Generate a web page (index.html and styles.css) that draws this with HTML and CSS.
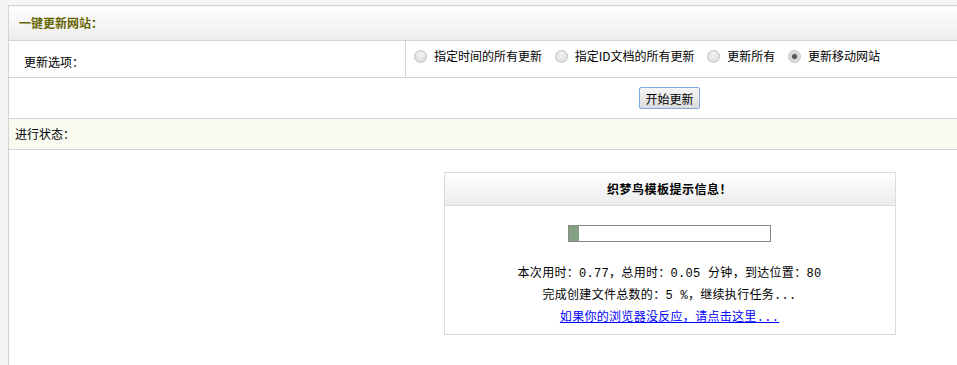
FILE: index.html
```html
<!DOCTYPE html>
<html lang="zh-CN">
<head>
    <meta charset="UTF-8">
    <title>一键更新网站</title>
    <link rel="stylesheet" href="styles.css">
</head>
<body>

    <!-- main update table -->
    <table class="main">
        <tr class="headRow">
            <td colspan="2" class="head">一键更新网站：</td>
        </tr>
        <tr class="optRow">
            <td class="label">更新选项：</td>
            <td class="opts">
                <label><input type="radio" name="uptype"> 指定时间的所有更新</label>
                <label><input type="radio" name="uptype"> 指定ID文档的所有更新</label>
                <label><input type="radio" name="uptype"> 更新所有</label>
                <label><input type="radio" name="uptype" checked> 更新移动网站</label>
            </td>
        </tr>
        <tr class="btnRow">
            <td colspan="2" class="btnCell"><button type="button" class="btn">开始更新</button></td>
        </tr>
        <tr class="statusRow">
            <td colspan="2" class="status">进行状态：</td>
        </tr>
        <tr>
            <td colspan="2" class="result">
                <!-- message box -->
                <div class="msgbox">
                    <div class="msgTitle">织梦鸟模板提示信息！</div>
                    <div class="msgBody">
                        <div class="bar"><div class="barFill" style="width: 10px;"></div></div>
                        <p>本次用时：0.77，总用时：0.05 分钟，到达位置：80</p>
                        <p>完成创建文件总数的：5 %，继续执行任务...</p>
                        <p><a href="#">如果你的浏览器没反应，请点击这里...</a></p>
                    </div>
                </div>
            </td>
        </tr>
    </table>

</body>
</html>
```

FILE: styles.css
```css
html, body {
    overflow: hidden;
}
body {
    margin: 5px 0 0 8px;
    background-color: #f5f5f5;
    font-family: "Noto Sans CJK SC", "DejaVu Sans", sans-serif;
    font-size: 12px;
    line-height: 16px;
    color: #000;
}
.main {
    width: 1323px;
    border-collapse: collapse;
    border: 1px solid #d4d4d4;
    background-color: #fff;
}
.main td {
    border-bottom: 1px solid #d4d4d4;
    padding: 0;
}
.headRow {
    height: 35px;
}
.head {
    padding-left: 10px !important;
    background: linear-gradient(#ffffff, #ececec);
    color: #666600;
    font-weight: bold;
}
.optRow {
    height: 37px;
}
.label {
    width: 381px;
    padding: 5px 0 0 15px !important;
    border-right: 1px solid #d4d4d4;
}
.opts {
    vertical-align: top;
    padding: 7px 0 0 4px !important;
}
.opts label {
    display: inline-flex;
    align-items: center;
    margin-right: 6px;
}
.opts input {
    appearance: none;
    width: 13px;
    height: 13px;
    margin: 0 7px 0 4px;
    border: 1px solid #c4c4c4;
    border-radius: 50%;
    background: radial-gradient(circle at 50% 35%, #f4f4f4, #d6d6d6);
}
.opts input:checked {
    background: radial-gradient(circle, #555 0, #555 2px, #d0d0d0 3px, #e8e8e8 6px);
}
.btnRow {
    height: 41px;
}
.btnCell {
    text-align: center;
}
.btn {
    font-family: inherit;
    font-size: 12px;
    height: 22px;
    padding: 0 5px;
    border: 1px solid #7ea9de;
    border-radius: 2px;
    background: linear-gradient(#f6f6f6, #dcdcdc);
    color: #000;
}
.statusRow {
    height: 31px;
}
.status {
    padding-left: 6px !important;
    background-color: #f9faf0;
}
.result {
    padding: 22px 0 60px 0 !important;
}
.msgbox {
    width: 450px;
    margin: 0 auto;
    border: 1px solid #dcdcdc;
}
.msgTitle {
    height: 32px;
    line-height: 32px;
    text-align: center;
    font-weight: bold;
    letter-spacing: 0.5px;
    background: linear-gradient(#ffffff, #ececec);
    border-bottom: 1px solid #dcdcdc;
}
.msgBody {
    padding: 19px 0 5px;
    text-align: center;
}
.bar {
    width: 201px;
    height: 15px;
    margin: 0 auto 21px;
    border: 1px solid #888;
    background-color: #fff;
}
.barFill {
    height: 15px;
    background-color: #86a083;
}
.msgBody p {
    margin: 0;
    line-height: 22px;
    letter-spacing: 0.3px;
    font-family: "Liberation Mono", "Noto Sans CJK SC", monospace;
}
.msgBody a {
    color: #0000ff;
}
```
